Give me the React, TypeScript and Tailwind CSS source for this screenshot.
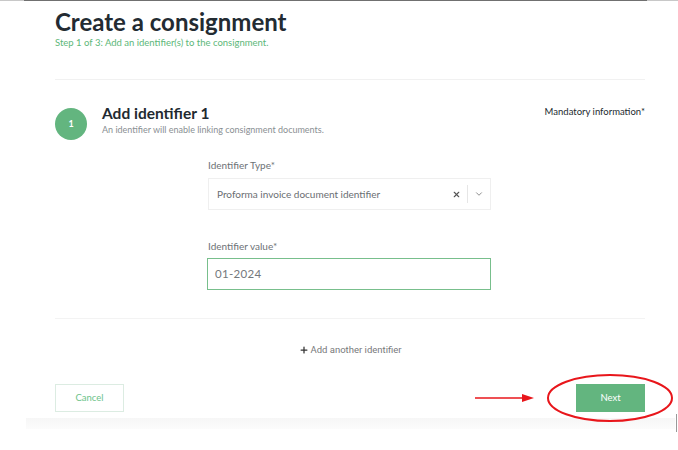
import { ChevronDown, X, Plus } from 'lucide-react'

const FONT = { fontFamily: 'Lato, "Noto Sans", sans-serif' }

function IdentifierStep() {
  return (
    <div className="flex items-start justify-between pt-[24px]">
      <div className="flex items-start gap-[15px]">
        <div className="mt-[4px] flex h-[32px] w-[32px] items-center justify-center rounded-full bg-[#63b57f] text-[9px] font-bold text-white">
          1
        </div>
        <div>
          <div className="text-[15.5px] font-bold leading-[19px] text-[#222a30]">Add identifier 1</div>
          <div className="mt-[1px] text-[9px] leading-[12px] text-[#8a8f93]">
            An identifier will enable linking consignment documents.
          </div>
        </div>
      </div>
      <div className="pt-[2px] text-[9.5px] leading-[12px] text-[#222a30]">Mandatory information*</div>
    </div>
  )
}

export default function App() {
  return (
    <div className="relative h-[450px] w-[678px] overflow-hidden bg-white" style={FONT}>
      <div className="flex h-[1px]">
        <div className="w-[24px] bg-[#c8c8c8]" />
        <div className="flex-1 bg-[#707070]" />
        <div className="w-[31px] bg-[#c8c8c8]" />
      </div>

      <div className="pl-[55px] pr-[33px]">
        <h1 className="mt-[7px] text-[24px] font-bold leading-[28px] text-[#232b32]">Create a consignment</h1>
        <div className="mt-[1px] text-[9.5px] leading-[12px] text-[#5db779]">
          Step 1 of 3: Add an identifier(s) to the consignment.
        </div>

        <div className="mt-[30px] h-px bg-[#f1f1f1]" />

        <IdentifierStep />

        <div className="ml-[153px] w-[283px] pt-[19px]">
          <div className="text-[10px] leading-[12px] text-[#6d7276]">Identifier Type*</div>
          <div className="mt-[7px] flex h-[32px] items-center border border-[#efefef] pl-[8px] text-[10px] text-[#6a6e72]">
            <span className="flex-1">Proforma invoice document identifier</span>
            <X className="mr-[6px] h-[9px] w-[9px] text-[#555]" strokeWidth={3} />
            <div className="h-[18px] w-px bg-[#e6e6e6]" />
            <ChevronDown className="mx-[6px] h-[10px] w-[10px] text-[#777]" strokeWidth={2} />
          </div>

          <div className="mt-[30px] text-[10px] leading-[12px] text-[#6d7276]">Identifier value*</div>
          <div className="-ml-px mt-[6px] flex h-[32px] w-[284px] items-center border border-[#78bf8c] pl-[7px] text-[11.5px] tracking-[0.3px] text-[#74787c]">
            01-2024
          </div>
        </div>

        <div className="mt-[28px] h-px bg-[#f3f3f3]" />

        <div
          className="mt-[24px] flex items-center justify-center gap-[2px] text-[9.5px] text-[#77797b]"
          style={{ fontFamily: 'Roboto, "Liberation Sans", sans-serif' }}
        >
          <Plus className="h-[10px] w-[10px] text-[#333]" strokeWidth={3} />
          <span>Add another identifier</span>
        </div>

        <div className="mt-[27px] flex items-center justify-between">
          <button className="h-[28px] w-[69px] border border-[#dcece2] text-[9.5px] text-[#6cc38a]">Cancel</button>
          <button className="h-[28px] w-[69px] bg-[#63b57f] text-[9.5px] text-white">Next</button>
        </div>
      </div>

      <div className="ml-[26px] mr-[3px] mt-[6px] h-[11px] bg-gradient-to-b from-[#f6f6f6] to-[#fcfcfc]" />

      <div className="absolute left-[676px] top-[414px] h-[18px] w-px bg-[#999]" />

      <svg className="absolute left-0 top-0" width="678" height="450" viewBox="0 0 678 450">
        <ellipse cx="610" cy="398" rx="62" ry="23" fill="none" stroke="#e8161b" strokeWidth="2" />
        <line x1="475" y1="398" x2="524" y2="398" stroke="#e8161b" strokeWidth="1.6" />
        <polygon points="522,394 534,398 522,402" fill="#e8161b" />
      </svg>
    </div>
  )
}
